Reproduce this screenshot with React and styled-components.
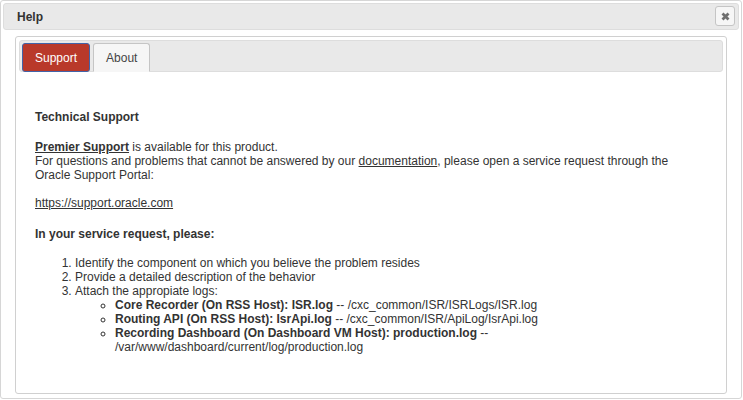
import React from "react";
import styled, { createGlobalStyle } from "styled-components";

const Global = createGlobalStyle`
  html, body { margin: 0; padding: 0; background: #fff; }
  body { font-family: "Liberation Sans", Arial, sans-serif; font-size: 12px; color: #333; }
  * { box-sizing: border-box; }
`;

const Dialog = styled.div`
  width: 742px;
  height: 399px;
  border: 1px solid #d6d6d6;
  border-radius: 3px;
  padding: 2px;
  display: flex;
  flex-direction: column;
  background: #fff;
`;

const TitleBar = styled.div`
  position: relative;
  height: 27px;
  flex: none;
  display: flex;
  align-items: center;
  padding: 0 13px;
  background: #e9e9e9;
  border: 1px solid #dddddd;
  border-radius: 3px;
  font-weight: bold;
  font-size: 12px;
  color: #333;
`;

const CloseButton = styled.button`
  position: absolute;
  right: 3px;
  top: 2px;
  width: 20px;
  height: 20px;
  padding: 0;
  border: 1px solid #c5c5c5;
  border-radius: 3px;
  background: #f6f6f6;
  display: flex;
  align-items: center;
  justify-content: center;
`;

const Content = styled.div`
  flex: 1;
  display: flex;
  padding: 6px 12px 2px 12px;
`;

const Tabs = styled.div`
  flex: 1;
  display: flex;
  flex-direction: column;
  border: 1px solid #d0d0d0;
  border-radius: 3px;
  padding: 3px;
`;

const TabNav = styled.ul`
  list-style: none;
  margin: 0;
  padding: 3px 2px 0 2px;
  height: 32px;
  display: flex;
  align-items: flex-end;
  gap: 3px;
  background: #e9e9e9;
  border: 1px solid #dddddd;
  border-radius: 3px;
`;

const Tab = styled.li`
  height: 29px;
  margin-bottom: -1px;
  padding: 0 12px;
  display: flex;
  align-items: center;
  border: 1px solid ${(p) => (p.$active ? "#4263a8" : "#c5c5c5")};
  border-bottom-color: ${(p) => (p.$active ? "#4263a8" : "#f6f6f6")};
  border-radius: 3px 3px ${(p) => (p.$active ? "3px 3px" : "0 0")};
  background: ${(p) => (p.$active ? "#b9392a" : "#f6f6f6")};
  color: ${(p) => (p.$active ? "#ffffff" : "#454545")};
  font-size: 12px;
`;

const Panel = styled.div`
  flex: 1;
  padding: 38px 30px 12px 16px;
  line-height: 14px;
  color: #333;
`;

const Heading = styled.div`
  font-weight: bold;
  margin: ${(p) => p.$mt || 0}px 0 0 0;
`;

const Para = styled.p`
  margin: ${(p) => p.$mt || 0}px 0 0 0;
`;

const Link = styled.a`
  color: #333;
  text-decoration: underline;
  font-weight: ${(p) => (p.$bold ? "bold" : "normal")};
`;

const Steps = styled.ol`
  margin: 15px 0 0 0;
  padding-left: 40px;
`;

const Logs = styled.ul`
  margin: 0;
  padding-left: 40px;
  list-style-type: circle;
`;

export default function App() {
  return (
    <>
      <Global />
      <Dialog>
        <TitleBar>
          Help
          <CloseButton aria-label="close">
            <svg width="9" height="9" viewBox="0 0 9 9">
              <path d="M1.5 1.5 L7.5 7.5 M7.5 1.5 L1.5 7.5" stroke="#6f6f6f" strokeWidth="2.8" strokeLinecap="butt" />
            </svg>
          </CloseButton>
        </TitleBar>
        <Content>
          <Tabs>
            <TabNav>
              <Tab $active>Support</Tab>
              <Tab>About</Tab>
            </TabNav>
            <Panel>
              <Heading>Technical Support</Heading>
              <Para $mt={16}>
                <Link $bold href="#">Premier Support</Link> is available for this product.
                <br />
                For questions and problems that cannot be answered by our{" "}
                <Link href="#">documentation</Link>, please open a service request through the Oracle Support Portal:
              </Para>
              <Para $mt={14}>
                <Link href="#">https://support.oracle.com</Link>
              </Para>
              <Heading $mt={17}>In your service request, please:</Heading>
              <Steps>
                <li>Identify the component on which you believe the problem resides</li>
                <li>Provide a detailed description of the behavior</li>
                <li>
                  Attach the appropiate logs:
                  <Logs>
                    <li>
                      <b>Core Recorder (On RSS Host): ISR.log</b> -- /cxc_common/ISR/ISRLogs/ISR.log
                    </li>
                    <li>
                      <b>Routing API (On RSS Host): IsrApi.log</b> -- /cxc_common/ISR/ApiLog/IsrApi.log
                    </li>
                    <li>
                      <b>Recording Dashboard (On Dashboard VM Host): production.log</b> -- /var/www/dashboard/current/log/production.log
                    </li>
                  </Logs>
                </li>
              </Steps>
            </Panel>
          </Tabs>
        </Content>
      </Dialog>
    </>
  );
}
